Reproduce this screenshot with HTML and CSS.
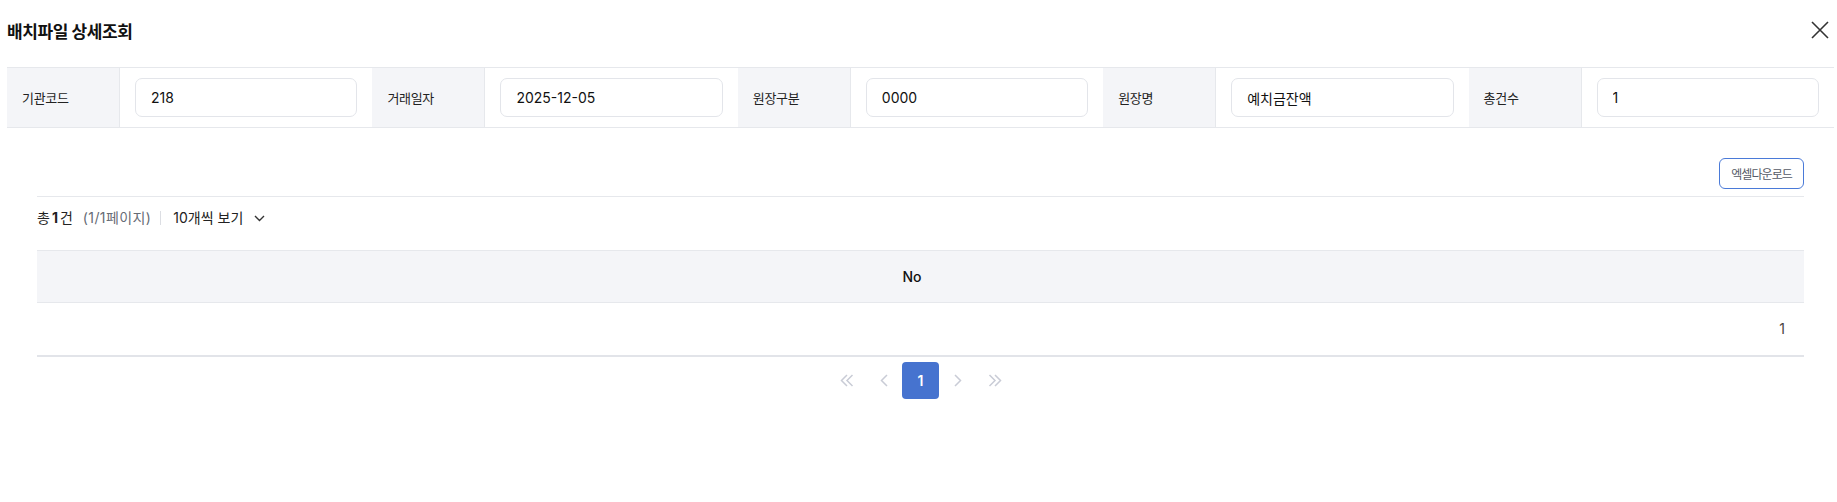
FILE: index.html
```html
<!DOCTYPE html>
<html lang="ko">
<head>
    <meta charset="UTF-8">
    <meta name="viewport" content="width=device-width, initial-scale=1.0">
    <title>배치파일 상세조회</title>
    <link rel="stylesheet" href="styles.css">
</head>
<body>
    <div class="modal">
        <header class="modal-head">
            <h2 class="modal-title">배치파일 상세조회</h2>
            <button class="btn-close" type="button" aria-label="닫기">
                <svg width="18" height="18" viewBox="0 0 18 18">
                    <path d="M1 1 L17 17 M17 1 L1 17" stroke="#333" stroke-width="1.6" fill="none"/>
                </svg>
            </button>
        </header>

        <div class="info-grid">
            <div class="info-label">기관코드</div>
            <div class="info-value"><input type="text" value="218" readonly></div>
            <div class="info-label">거래일자</div>
            <div class="info-value"><input type="text" value="2025-12-05" readonly></div>
            <div class="info-label">원장구분</div>
            <div class="info-value"><input type="text" value="0000" readonly></div>
            <div class="info-label">원장명</div>
            <div class="info-value"><input type="text" value="예치금잔액" readonly></div>
            <div class="info-label">총건수</div>
            <div class="info-value"><input type="text" value="1" readonly></div>
        </div>

        <section class="result">
            <div class="result-actions">
                <button class="btn-excel" type="button">엑셀다운로드</button>
            </div>

            <div class="result-bar">
                <span class="total">총<b>1</b>건</span>
                <span class="page-info">(1/1페이지)</span>
                <span class="divider"></span>
                <span class="per-page">
                    10개씩 보기
                    <svg width="11" height="7" viewBox="0 0 11 7">
                        <path d="M1 1 L5.5 5.5 L10 1" stroke="#333" stroke-width="1.4" fill="none"/>
                    </svg>
                </span>
            </div>

            <table class="grid">
                <thead>
                    <tr><th>No</th></tr>
                </thead>
                <tbody>
                    <tr><td>1</td></tr>
                </tbody>
            </table>

            <nav class="paging">
                <button type="button" class="pg-arrow" aria-label="처음">
                    <svg width="14" height="13" viewBox="0 0 14 13">
                        <path d="M7 1 L1.5 6.5 L7 12 M12.5 1 L7 6.5 L12.5 12" stroke="#c9ccd6" stroke-width="1.5" fill="none"/>
                    </svg>
                </button>
                <button type="button" class="pg-arrow" aria-label="이전">
                    <svg width="8" height="13" viewBox="0 0 8 13">
                        <path d="M7 1 L1.5 6.5 L7 12" stroke="#c9ccd6" stroke-width="1.5" fill="none"/>
                    </svg>
                </button>
                <button type="button" class="pg-num active">1</button>
                <button type="button" class="pg-arrow" aria-label="다음">
                    <svg width="8" height="13" viewBox="0 0 8 13">
                        <path d="M1 1 L6.5 6.5 L1 12" stroke="#c9ccd6" stroke-width="1.5" fill="none"/>
                    </svg>
                </button>
                <button type="button" class="pg-arrow" aria-label="마지막">
                    <svg width="14" height="13" viewBox="0 0 14 13">
                        <path d="M1.5 1 L7 6.5 L1.5 12 M7 1 L12.5 6.5 L7 12" stroke="#c9ccd6" stroke-width="1.5" fill="none"/>
                    </svg>
                </button>
            </nav>
        </section>
    </div>
</body>
</html>
```

FILE: styles.css
```css
* {
    box-sizing: border-box;
}

body {
    margin: 0;
    background: #ffffff;
    color: #111111;
    font-family: "Inter", "Noto Sans CJK KR", sans-serif;
    font-size: 14px;
}

button {
    font-family: inherit;
    cursor: pointer;
}

.modal {
    padding: 0 3px 0 7px;
}

/* header */
.modal-head {
    height: 60px;
    display: flex;
    align-items: center;
    justify-content: space-between;
}

.modal-title {
    margin: 0;
    font-size: 17px;
    font-weight: 700;
    letter-spacing: -0.4px;
    color: #111111;
}

.btn-close {
    width: 18px;
    height: 18px;
    margin-right: 5px;
    padding: 0;
    border: 0;
    background: none;
    display: flex;
}

/* info table */
.info-grid {
    margin-top: 7px;
    display: grid;
    grid-template-columns: repeat(5, 113px 1fr);
    border-top: 1px solid #e6e8ec;
    border-bottom: 1px solid #e6e8ec;
}

.info-label {
    display: flex;
    align-items: center;
    padding-left: 15px;
    background: #f4f5f8;
    border-right: 1px solid #e6e8ec;
    font-size: 13px;
    letter-spacing: -0.3px;
    color: #222222;
}

.info-value {
    padding: 10px 15px 10px 15px;
}

.info-value input {
    width: 100%;
    height: 39px;
    padding: 0 15px;
    border: 1px solid #e3e5ea;
    border-radius: 7px;
    background: #ffffff;
    font-family: inherit;
    font-size: 14px;
    color: #111111;
    outline: none;
}

/* result area */
.result {
    margin-top: 30px;
    padding: 0 30px;
}

.result-actions {
    display: flex;
    justify-content: flex-end;
    padding-bottom: 7px;
    border-bottom: 1px solid #e6e8ec;
}

.btn-excel {
    height: 31px;
    padding: 0 11px;
    border: 1px solid #4a7ad8;
    border-radius: 6px;
    background: #ffffff;
    font-size: 12px;
    letter-spacing: -0.9px;
    color: #555a66;
}

.result-bar {
    display: flex;
    align-items: center;
    padding: 11px 0 22px;
    line-height: 20px;
}

.total {
    font-size: 14px;
    color: #222222;
}

.total b {
    font-weight: 700;
    margin: 0 2px;
}

.page-info {
    margin-left: 10px;
    font-size: 14px;
    letter-spacing: 0.4px;
    color: #666b75;
}

.divider {
    width: 1px;
    height: 14px;
    margin: 0 12px 0 9px;
    background: #dcdee3;
}

.per-page {
    display: flex;
    align-items: center;
    gap: 11px;
    font-size: 14px;
    color: #222222;
}

/* data table */
.grid {
    width: 100%;
    border-collapse: collapse;
}

.grid th {
    height: 52px;
    padding: 0 17px 0 0;
    background: #f4f5f8;
    border-top: 1px solid #e6e8ec;
    border-bottom: 1px solid #e6e8ec;
    font-size: 14px;
    font-weight: 500;
    color: #111111;
}

.grid td {
    height: 53px;
    padding: 0 19px 0 0;
    text-align: right;
    border-bottom: 2px solid #e2e4e9;
    font-size: 14px;
    color: #4a4540;
}

/* paging */
.paging {
    display: flex;
    justify-content: center;
    margin-top: 5px;
}

.paging button {
    width: 37px;
    height: 37px;
    padding: 0;
    border: 0;
    background: none;
    display: flex;
    align-items: center;
    justify-content: center;
}

.pg-num.active {
    border-radius: 4px;
    background: #4673cf;
    color: #ffffff;
    font-size: 14px;
    font-weight: 600;
}
```
